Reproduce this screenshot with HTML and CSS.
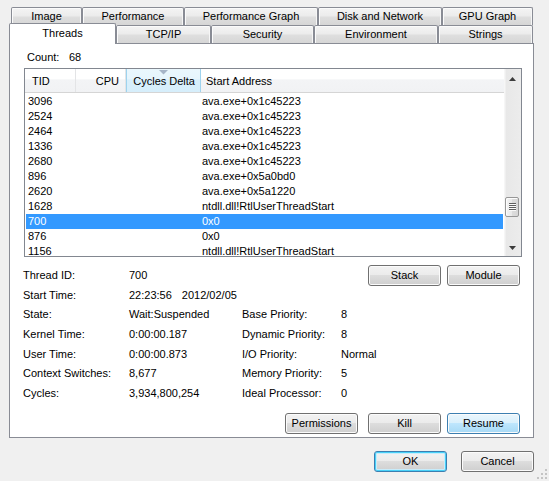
FILE: index.html
```html
<!DOCTYPE html>
<html>
<head>
<meta charset="utf-8">
<link rel="stylesheet" href="styles.css">
</head>
<body>
<div class="window">
  <div class="tab-row tab-row-back">
    <div class="tab w-image">Image</div>
    <div class="tab w-perf">Performance</div>
    <div class="tab w-perfgraph">Performance Graph</div>
    <div class="tab w-disk">Disk and Network</div>
    <div class="tab w-gpu">GPU Graph</div>
  </div>
  <div class="tab-row tab-row-front">
    <div class="tab tab-selected w-threads">Threads</div>
    <div class="tab w-tcp">TCP/IP</div>
    <div class="tab w-security">Security</div>
    <div class="tab w-env">Environment</div>
    <div class="tab w-strings">Strings</div>
  </div>
  <div class="panel">
    <div class="count"><span class="count-label">Count:</span><span>68</span></div>
    <div class="list">
      <div class="list-main">
        <div class="list-header">
          <div class="hcell hcell-tid">TID</div>
          <div class="hcell hcell-cpu">CPU</div>
          <div class="hcell hcell-cycles">
            <svg class="sort-arrow" width="9" height="5" viewBox="0 0 9 5"><polygon points="0,0 9,0 4.5,4.5" fill="#a6b5c8"/></svg>
            Cycles Delta
          </div>
          <div class="hcell hcell-addr">Start Address</div>
        </div>
        <div class="rows">
          <div class="row"><span class="c-tid">3096</span><span class="c-addr">ava.exe+0x1c45223</span></div>
          <div class="row"><span class="c-tid">2524</span><span class="c-addr">ava.exe+0x1c45223</span></div>
          <div class="row"><span class="c-tid">2464</span><span class="c-addr">ava.exe+0x1c45223</span></div>
          <div class="row"><span class="c-tid">1336</span><span class="c-addr">ava.exe+0x1c45223</span></div>
          <div class="row"><span class="c-tid">2680</span><span class="c-addr">ava.exe+0x1c45223</span></div>
          <div class="row"><span class="c-tid">896</span><span class="c-addr">ava.exe+0x5a0bd0</span></div>
          <div class="row"><span class="c-tid">2620</span><span class="c-addr">ava.exe+0x5a1220</span></div>
          <div class="row"><span class="c-tid">1628</span><span class="c-addr">ntdll.dll!RtlUserThreadStart</span></div>
          <div class="row row-selected"><span class="c-tid">700</span><span class="c-addr">0x0</span></div>
          <div class="row"><span class="c-tid">876</span><span class="c-addr">0x0</span></div>
          <div class="row"><span class="c-tid">1156</span><span class="c-addr">ntdll.dll!RtlUserThreadStart</span></div>
        </div>
      </div>
      <div class="scrollbar">
        <div class="sb-btn sb-up"><svg width="7" height="4" viewBox="0 0 7 4"><polygon points="0,4 7,4 3.5,0" fill="#3c3c3c"/></svg></div>
        <div class="sb-space-top"></div>
        <div class="sb-thumb"><svg width="7" height="8" viewBox="0 0 7 8"><rect x="0" y="0" width="7" height="1" fill="#5f5f5f"/><rect x="0" y="2" width="7" height="1" fill="#5f5f5f"/><rect x="0" y="4" width="7" height="1" fill="#5f5f5f"/><rect x="0" y="6" width="7" height="1" fill="#5f5f5f"/><rect x="0" y="1" width="7" height="1" fill="#fafafa"/><rect x="0" y="3" width="7" height="1" fill="#fafafa"/><rect x="0" y="5" width="7" height="1" fill="#fafafa"/><rect x="0" y="7" width="7" height="1" fill="#fafafa"/></svg></div>
        <div class="sb-space-bottom"></div>
        <div class="sb-btn sb-down"><svg width="7" height="4" viewBox="0 0 7 4"><polygon points="0,0 7,0 3.5,4" fill="#3c3c3c"/></svg></div>
      </div>
    </div>
    <div class="details">
      <div class="label">Thread ID:</div><div class="value">700</div>
      <div class="detail-buttons"><button class="btn">Stack</button><button class="btn">Module</button></div>
      <div class="label">Start Time:</div><div class="value value-wide"><span>22:23:56</span><span class="date">2012/02/05</span></div>
      <div class="label">State:</div><div class="value">Wait:Suspended</div><div class="label">Base Priority:</div><div class="value">8</div>
      <div class="label">Kernel Time:</div><div class="value">0:00:00.187</div><div class="label">Dynamic Priority:</div><div class="value">8</div>
      <div class="label">User Time:</div><div class="value">0:00:00.873</div><div class="label">I/O Priority:</div><div class="value">Normal</div>
      <div class="label">Context Switches:</div><div class="value">8,677</div><div class="label">Memory Priority:</div><div class="value">5</div>
      <div class="label">Cycles:</div><div class="value">3,934,800,254</div><div class="label">Ideal Processor:</div><div class="value">0</div>
    </div>
    <div class="panel-buttons">
      <button class="btn btn-perm">Permissions</button>
      <button class="btn">Kill</button>
      <button class="btn btn-hover">Resume</button>
    </div>
  </div>
  <div class="dialog-buttons">
    <button class="btn btn-default">OK</button>
    <button class="btn">Cancel</button>
  </div>
  <svg class="grip" width="11" height="11" viewBox="0 0 11 11">
    <rect x="8" y="0" width="2" height="2" fill="#c4c4c4"/>
    <rect x="4" y="4" width="2" height="2" fill="#c4c4c4"/><rect x="8" y="4" width="2" height="2" fill="#c4c4c4"/>
    <rect x="0" y="8" width="2" height="2" fill="#c4c4c4"/><rect x="4" y="8" width="2" height="2" fill="#c4c4c4"/><rect x="8" y="8" width="2" height="2" fill="#c4c4c4"/>
  </svg>
</div>
</body>
</html>
```
FILE: styles.css
```css
* { box-sizing: border-box; }
html, body { margin: 0; padding: 0; }
body {
  font-family: "Liberation Sans", Arial, sans-serif;
  font-size: 11px;
  color: #000;
  background: #f0f0f0;
}
.window {
  position: relative;
  width: 549px;
  height: 481px;
  background: #f0f0f0;
  padding-top: 7px;
  overflow: hidden;
}
.tab-row { display: flex; height: 18px; }
.tab-row-back { margin-left: 11px; }
.tab-row-front { margin-left: 9px; align-items: flex-end; }
.tab {
  height: 18px;
  border: 1px solid #898c95;
  border-bottom: none;
  border-radius: 2px 2px 0 0;
  background: linear-gradient(#f4f4f4 0%, #ececec 45%, #dedede 55%, #d6d6d6 100%);
  box-shadow: inset 1px 1px 0 #fbfbfb, inset -1px 0 0 #f6f6f6;
  text-align: center;
  line-height: 17px;
  white-space: nowrap;
}
.tab-selected {
  position: relative;
  z-index: 1;
  height: 21px;
  margin-bottom: -1px;
  background: #fff;
  box-shadow: none;
  line-height: 18px;
}
.w-image { width: 71px; }
.w-perf { width: 102px; }
.w-perfgraph { width: 134px; }
.w-disk { width: 124px; }
.w-gpu { width: 91px; }
.w-threads { width: 107px; }
.w-tcp { width: 95px; }
.w-security { width: 103px; }
.w-env { width: 124px; }
.w-strings { width: 95px; }

.panel {
  margin-left: 9px;
  width: 525px;
  height: 395px;
  border: 1px solid #898c95;
  background: #fff;
}
.count {
  margin: 7px 0 0 17px;
  line-height: 13px;
}
.count-label { display: inline-block; width: 42px; }

.list {
  display: flex;
  margin: 4px 0 0 14px;
  width: 498px;
  height: 189px;
  border: 1px solid #828790;
  background: #fff;
}
.list-main { flex: 1; overflow: hidden; }
.list-header {
  display: grid;
  grid-template-columns: 51px 50px 75px 1fr;
  height: 24px;
  border-bottom: 1px solid #d5d5d5;
  background: linear-gradient(#ffffff 0%, #ffffff 45%, #f3f4f6 46%, #f1f2f4 100%);
}
.hcell {
  padding-top: 2px;
  line-height: 21px;
  white-space: nowrap;
  border-right: 1px solid #e3e4e6;
}
.hcell-tid { padding-left: 7px; }
.hcell-cpu { text-align: right; padding-right: 6px; }
.hcell-cycles {
  position: relative;
  text-align: right;
  padding-right: 5px;
  border-left: 1px solid #9ed3ee;
  border-right: 1px solid #9ed3ee;
  background: linear-gradient(#eaf7fd 0%, #e6f5fd 45%, #d8effb 46%, #d6eefb 100%);
}
.sort-arrow { position: absolute; left: 32px; top: 1px; }
.hcell-addr { padding-left: 5px; border-right: none; }

.rows { padding-top: 1px; }
.row {
  display: grid;
  grid-template-columns: 175px 1fr;
  height: 15px;
  line-height: 15px;
  margin: 0 1px;
  white-space: nowrap;
}
.c-tid { padding-left: 2px; }
.c-addr { padding-left: 1px; }
.row-selected { background: #3399ff; color: #fff; }

.scrollbar {
  width: 17px;
  display: flex;
  flex-direction: column;
  background: linear-gradient(to right, #f6f6f6 0, #f6f6f6 1px, #e8e8e8 2px, #ececec 100%);
}
.sb-btn { height: 17px; flex: none; }
.sb-btn svg { display: block; margin: 0 auto; }
.sb-up svg { margin-top: 8px; }
.sb-down svg { margin-top: 7px; }
.sb-space-top { flex: 0 0 111px; }
.sb-thumb {
  flex: 0 0 20px;
  margin: 0 2px 0 1px;
  border: 1px solid #979797;
  border-radius: 2px;
  background: linear-gradient(to right, #f4f4f4, #e9e9e9 50%, #dcdcdc 51%, #d7d7d7);
  box-shadow: inset 1px 1px 0 #fcfcfc;
  display: flex;
  align-items: center;
  justify-content: center;
}
.sb-thumb svg { display: block; }
.sb-space-bottom { flex: 1; }

.details {
  display: grid;
  grid-template-columns: 106px 113px 99px 1fr;
  grid-template-rows: 21px 19px 19px 20px 20px 19px 21px;
  align-items: center;
  margin: 8px 13px 0 13px;
  line-height: 13px;
  white-space: nowrap;
}
.detail-buttons {
  grid-column: 3 / 5;
  grid-row: 1;
  justify-self: end;
  display: flex;
  gap: 6px;
}
.value-wide { grid-column: 2 / 5; }
.date { margin-left: 10px; }

.btn {
  width: 73px;
  height: 21px;
  padding: 0;
  border: 1px solid #707070;
  border-radius: 3px;
  background: linear-gradient(#f2f2f2 0%, #ebebeb 49%, #dddddd 50%, #cfcfcf 100%);
  box-shadow: inset 0 0 0 1px #fbfbfb;
  font-family: "Liberation Sans", Arial, sans-serif;
  font-size: 11px;
  color: #000;
  line-height: 19px;
}
.btn-hover {
  border-color: #3c7fb1;
  background: linear-gradient(#eaf6fd 0%, #d9f0fc 49%, #bee6fd 50%, #a7d9f5 100%);
}
.btn-default {
  border-color: #3c7fb1;
  box-shadow: inset 0 0 0 1px #48d1f8, inset 0 0 0 2px #c8ecfb;
}

.panel-buttons {
  display: flex;
  justify-content: flex-end;
  margin: 9px 13px 0 0;
}
.btn-perm { margin-right: 10px; }
.panel-buttons .btn + .btn { margin-left: 0; }
.panel-buttons .btn:last-child { margin-left: 6px; }

.dialog-buttons {
  display: flex;
  justify-content: flex-end;
  gap: 14px;
  margin: 13px 15px 0 0;
}
.grip { position: absolute; right: 1px; bottom: 1px; }
```
